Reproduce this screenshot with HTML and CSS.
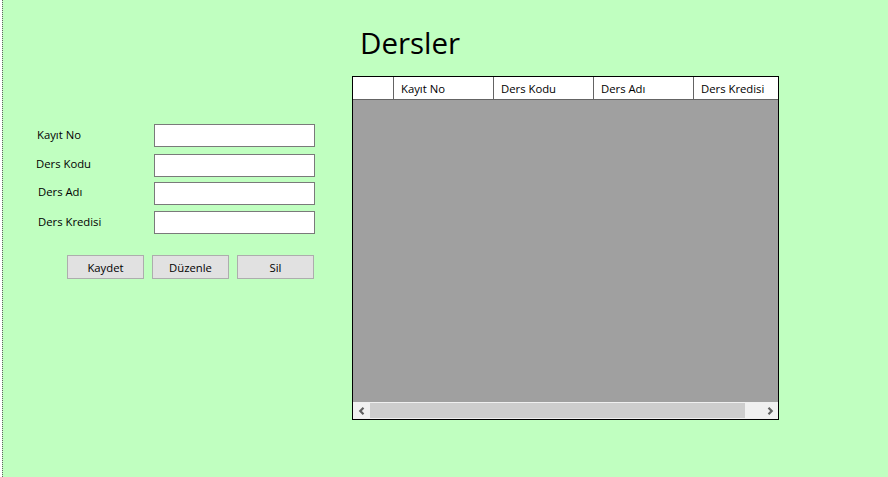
FILE: index.html
```html
<!DOCTYPE html>
<html>
<head>
<meta charset="utf-8">
<link rel="stylesheet" href="styles.css">
</head>
<body>
<div class="frame">
  <div class="form">
    <div class="row r1"><label class="lbl l1">Kayıt No</label><input class="box" type="text"></div>
    <div class="row r2"><label class="lbl l2">Ders Kodu</label><input class="box" type="text"></div>
    <div class="row r3"><label class="lbl l3">Ders Adı</label><input class="box" type="text"></div>
    <div class="row r4"><label class="lbl l4">Ders Kredisi</label><input class="box" type="text"></div>
    <div class="buttons">
      <button class="btn">Kaydet</button>
      <button class="btn">Düzenle</button>
      <button class="btn">Sil</button>
    </div>
  </div>
  <div class="right">
    <h1 class="title">Dersler</h1>
    <div class="grid">
      <div class="head">
        <div class="rowhead"></div>
        <div class="col">Kayıt No</div>
        <div class="col">Ders Kodu</div>
        <div class="col">Ders Adı</div>
        <div class="col last">Ders Kredisi</div>
      </div>
      <div class="body"></div>
      <div class="hscroll">
        <div class="arrow"><svg width="8" height="8" viewBox="0 0 8 8"><polyline points="5.5,0.8 2.3,4 5.5,7.2" fill="none" stroke="#606060" stroke-width="2.2"/></svg></div>
        <div class="track"><div class="thumb"></div></div>
        <div class="arrow"><svg width="8" height="8" viewBox="0 0 8 8"><polyline points="2.5,0.8 5.7,4 2.5,7.2" fill="none" stroke="#606060" stroke-width="2.2"/></svg></div>
      </div>
    </div>
  </div>
</div>
</body>
</html>
```

FILE: styles.css
```css
* { box-sizing: border-box; }
html, body { margin: 0; padding: 0; background: #ffffff; }
body { font-family: "Open Sans", "Noto Sans", sans-serif; font-size: 11.3px; color: #000; }

.frame {
  margin-left: 2px;
  border-left: 1px dotted #646464;
  background: #c0ffc0;
  height: 477px;
  display: flex;
  align-items: flex-start;
}

.form {
  width: 349px;
  padding-top: 124px;
  display: flex;
  flex-direction: column;
}
.row {
  display: flex;
  align-items: center;
  height: 23px;
}
.r2 { margin-top: 7px; }
.r3 { margin-top: 5px; }
.r4 { margin-top: 6px; }
.lbl { width: 151px; line-height: 16px; }
.l1 { padding-left: 34px; margin-top: -2px; }
.l2 { padding-left: 33px; margin-top: -4px; }
.l3 { padding-left: 35px; margin-top: -3px; }
.l4 { padding-left: 35px; margin-top: -2px; }
.box {
  width: 161px;
  height: 23px;
  border: 1px solid #7a7a7a;
  background: #fff;
  margin: 0;
  padding: 0 3px;
  outline: none;
}
.buttons {
  display: flex;
  gap: 8px;
  margin-top: 21px;
  padding-left: 64px;
}
.btn {
  width: 77px;
  height: 24px;
  background: #e1e1e1;
  border: 1px solid #adadad;
  font-family: "Open Sans", "Noto Sans", sans-serif;
  font-size: 11.3px;
  color: #000;
  padding: 0;
  margin: 0;
}

.right {
  display: flex;
  flex-direction: column;
}
.title {
  margin: 0;
  padding-left: 8px;
  padding-top: 23px;
  height: 76px;
  font-family: "Open Sans", "Noto Sans", sans-serif;
  font-weight: 400;
  font-size: 29.5px;
  line-height: 40px;
}
.grid {
  width: 427px;
  height: 344px;
  border: 1px solid #000;
  display: flex;
  flex-direction: column;
  background: #a0a0a0;
  overflow: hidden;
}
.head {
  height: 23px;
  display: flex;
  background: #fff;
  border-bottom: 1px solid #646464;
  flex: none;
}
.rowhead { width: 41px; border-right: 1px solid #646464; flex: none; }
.col {
  width: 100px;
  flex: none;
  border-right: 1px solid #646464;
  padding-left: 7px;
  line-height: 23px;
  white-space: nowrap;
}
.col.last { border-right: none; width: 84px; }
.body { flex: 1; }
.hscroll {
  height: 17px;
  flex: none;
  display: flex;
  background: #f0f0f0;
}
.arrow {
  width: 17px;
  display: flex;
  align-items: center;
  justify-content: center;
}
.track { flex: 1; padding: 1px 16px 1px 0; display: flex; }
.thumb { width: 375px; background: #cdcdcd; }
```
